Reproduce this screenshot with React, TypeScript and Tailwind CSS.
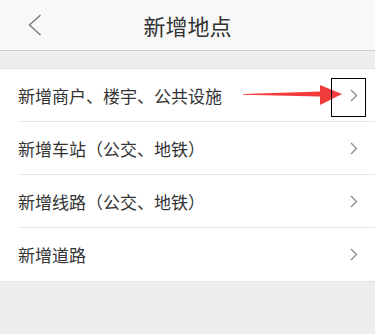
const rows = [
  "新增商户、楼宇、公共设施",
  "新增车站（公交、地铁）",
  "新增线路（公交、地铁）",
  "新增道路",
];

function Chevron() {
  return (
    <svg width="8" height="13" viewBox="0 0 8 13" className="shrink-0">
      <path d="M1 1l5.5 5.5L1 12" fill="none" stroke="#8a8a8a" strokeWidth="1.3" />
    </svg>
  );
}

export default function App() {
  return (
    <div
      className="relative w-[375px] h-[334px] bg-[#eeeeee] overflow-hidden"
      style={{ fontFamily: '"Noto Sans CJK SC", "Noto Sans", sans-serif' }}
    >
      {/* header */}
      <div className="relative h-[51px] bg-[#f8f8f8] border-b border-[#cccccc] flex items-center justify-center">
        <svg width="14" height="22" viewBox="0 0 14 22" className="absolute left-[28px] top-[14px]">
          <path d="M12.5 1L1.5 11l11 10" fill="none" stroke="#7a7a7a" strokeWidth="1.4" />
        </svg>
        <span className="text-[22px] text-[#333333] leading-none">新增地点</span>
      </div>

      {/* list */}
      <div className="mt-[17px] bg-white border-t border-b border-[#e0e0e0]">
        {rows.map((r, i) => (
          <div key={i} className="relative h-[53px] pl-[18px]">
            <div
              className={`h-full flex items-center pr-[17px] ${
                i < rows.length - 1 ? "border-b border-[#e8e8e8]" : ""
              }`}
            >
              <span className="flex-1 text-[17px] text-[#333333] leading-none">{r}</span>
              <Chevron />
            </div>
          </div>
        ))}
      </div>

      {/* annotation arrow */}
      <svg width="110" height="26" viewBox="0 0 110 26" className="absolute left-[240px] top-[83px]">
        <polygon points="3,11 80,8.5 80,2 102,11 80,22 80,13.5 3,11.8" fill="#f23b3b" />
      </svg>
      <div className="absolute left-[331px] top-[78px] w-[35px] h-[39px] border border-black" />
    </div>
  );
}
